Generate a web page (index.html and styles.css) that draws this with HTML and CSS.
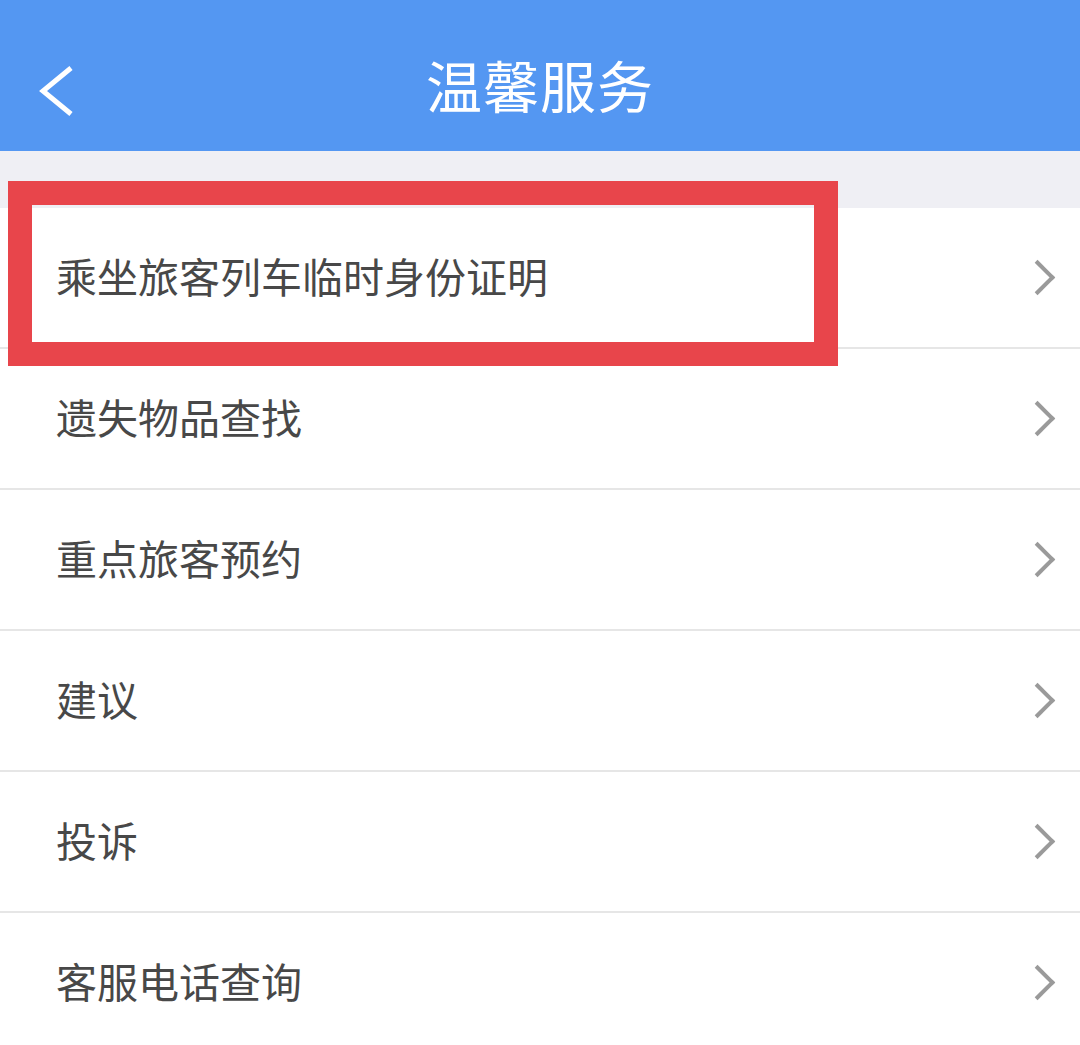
FILE: index.html
```html
<!DOCTYPE html>
<html lang="zh-CN">

<head>
    <meta charset="UTF-8">
    <meta name="viewport" content="width=device-width, initial-scale=1.0">
    <title>温馨服务</title>
    <link rel="stylesheet" href="styles.css">
</head>

<body>
    <div class="header">
        <svg class="back" width="40" height="56" viewBox="0 0 40 56">
            <polyline points="33,6 5,29 33,52" fill="none" stroke="#ffffff" stroke-width="5" />
        </svg>
        <h1>温馨服务</h1>
    </div>
    <div class="gap"></div>
    <ul class="menu">
        <li class="item">乘坐旅客列车临时身份证明<span class="arrow"></span></li>
        <li class="item">遗失物品查找<span class="arrow"></span></li>
        <li class="item">重点旅客预约<span class="arrow"></span></li>
        <li class="item">建议<span class="arrow"></span></li>
        <li class="item">投诉<span class="arrow"></span></li>
        <li class="item">客服电话查询<span class="arrow"></span></li>
    </ul>
    <div class="highlight"></div>
</body>

</html>
```

FILE: styles.css
```css
body {
    margin: 0;
    padding: 0;
    font-family: "Noto Sans CJK SC", "Noto Sans", sans-serif;
    background-color: #ffffff;
    position: relative;
    overflow: hidden;
    height: 1045px;
}

.header {
    position: relative;
    height: 151px;
    box-sizing: border-box;
    padding-top: 16px;
    background-color: #5497f2;
    display: flex;
    justify-content: center;
    align-items: center;
}

.header h1 {
    margin: 0;
    font-size: 56px;
    font-weight: 400;
    color: #ffffff;
    letter-spacing: 1px;
}

.back {
    position: absolute;
    left: 38px;
    top: 62px;
}

.gap {
    height: 57px;
    background-color: #efeff4;
}

.menu {
    list-style: none;
    margin: 0;
    padding: 0;
}

.item {
    height: 139px;
    box-sizing: border-box;
    border-bottom: 2px solid #e6e6e6;
    display: flex;
    align-items: center;
    justify-content: space-between;
    padding: 0 30px 6px 56px;
    height: 141px;
    font-size: 41px;
    color: #484848;
}

.arrow {
    width: 21px;
    height: 21px;
    margin-top: 6px;
    border-top: 4px solid #9a9a9a;
    border-right: 4px solid #9a9a9a;
    transform: rotate(45deg);
}

.highlight {
    position: absolute;
    left: 8px;
    top: 181px;
    width: 782px;
    height: 137px;
    border: 24px solid #e8454b;
}
```
